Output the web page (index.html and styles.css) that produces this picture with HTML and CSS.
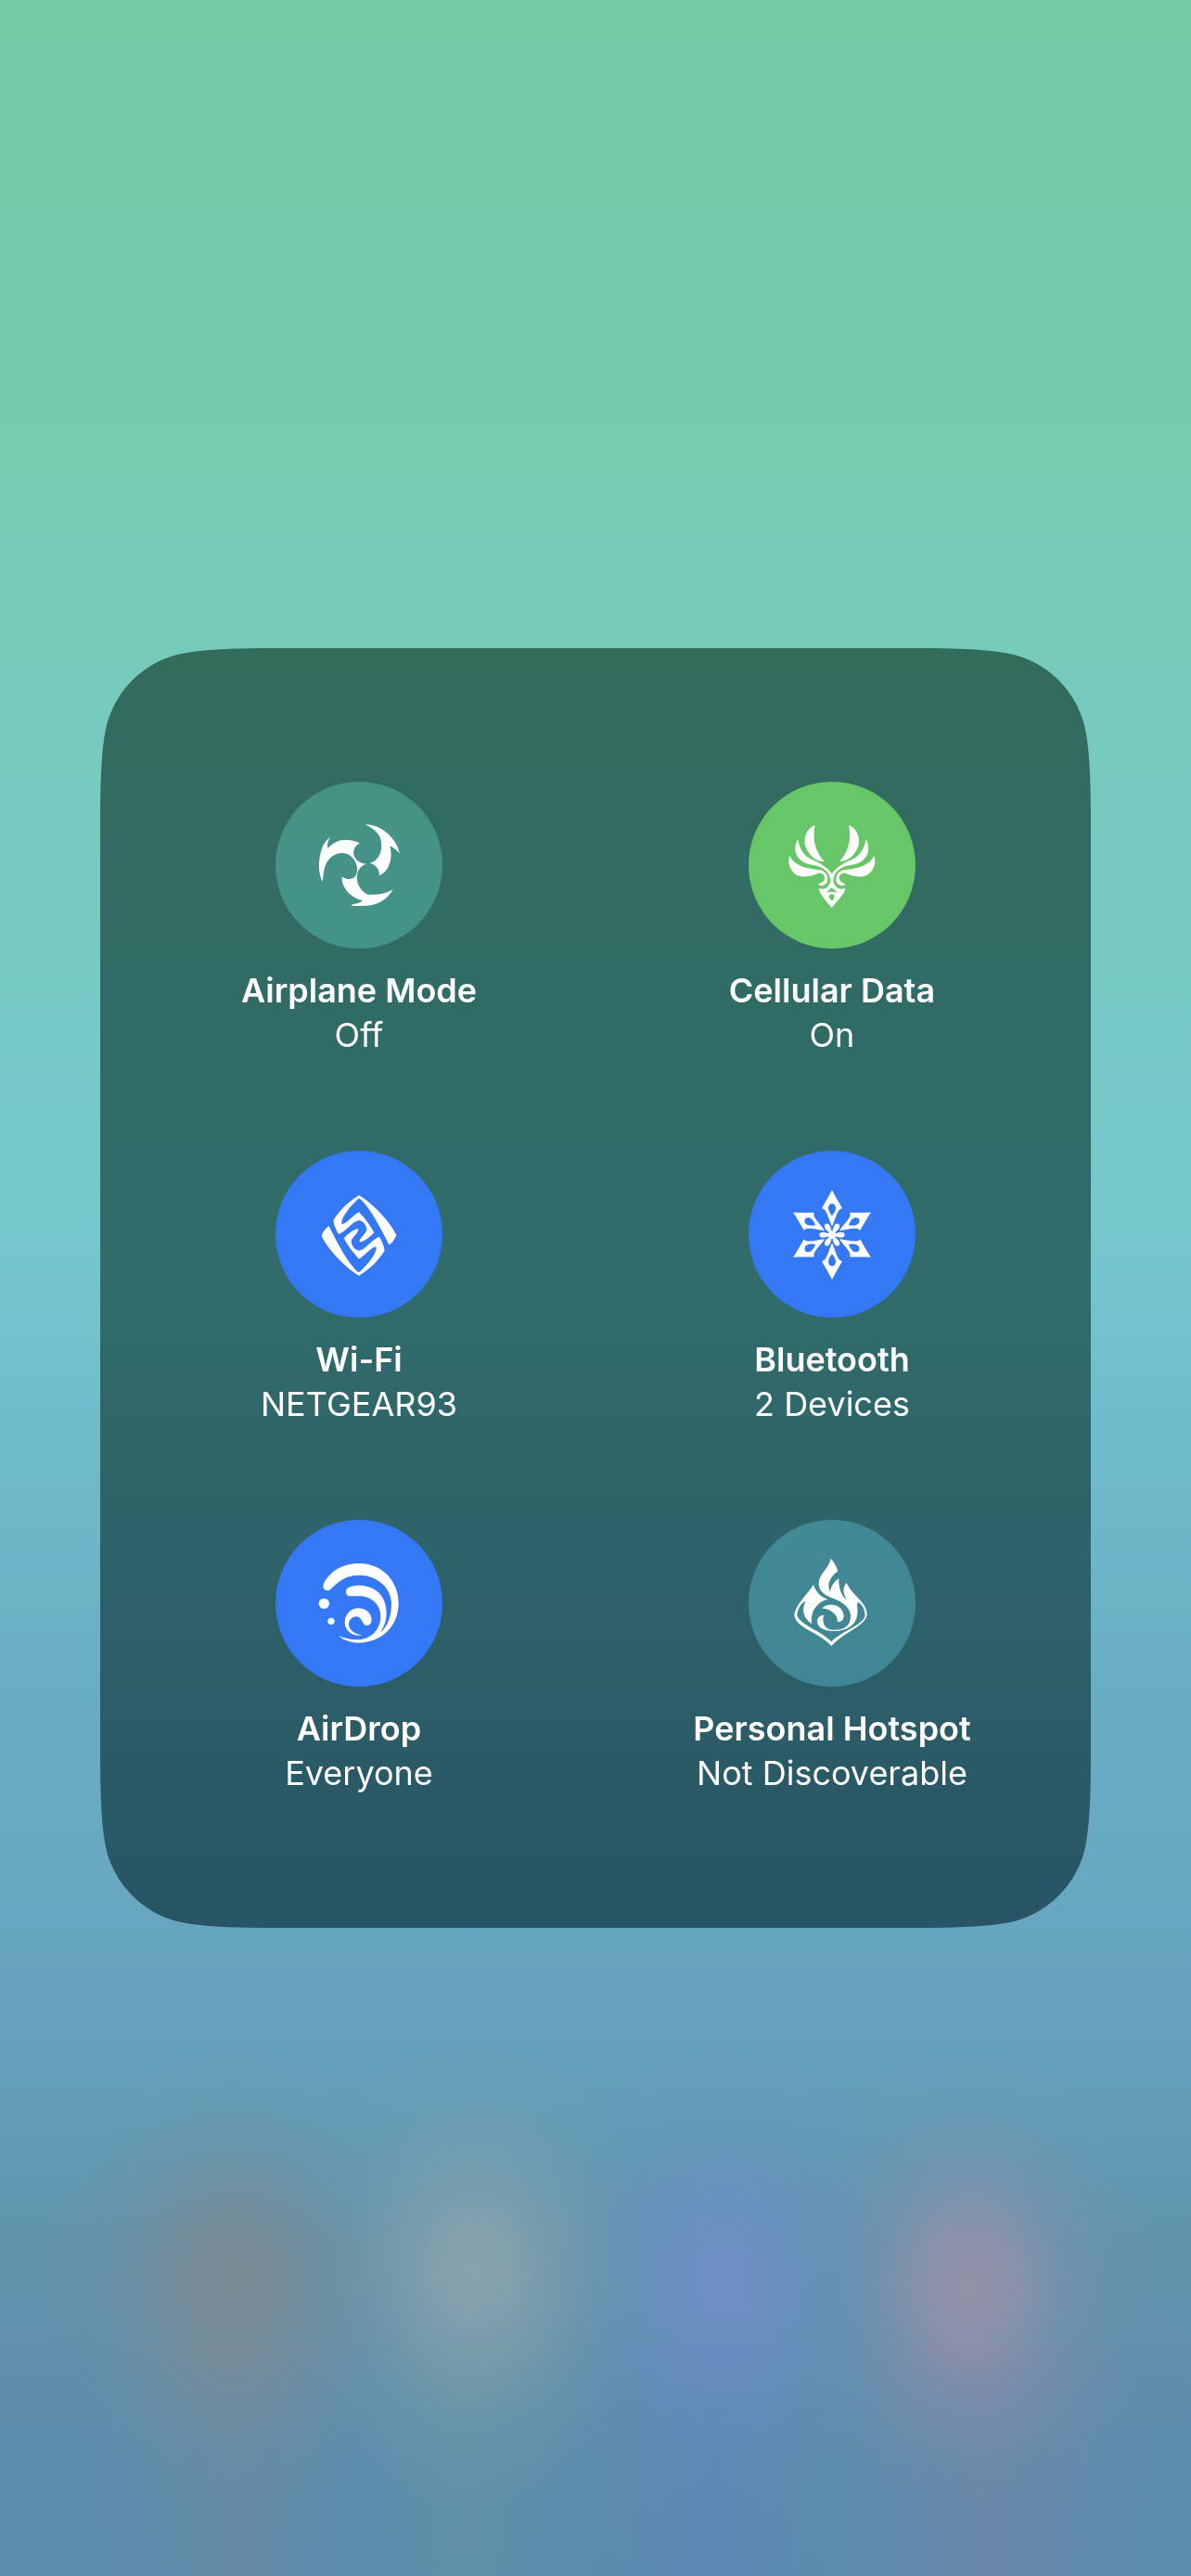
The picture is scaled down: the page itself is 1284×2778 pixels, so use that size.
FILE: index.html
```html
<!DOCTYPE html>
<html lang="en">
<head>
<meta charset="utf-8">
<meta name="viewport" content="width=device-width, initial-scale=1">
<title>Connectivity</title>
<link rel="stylesheet" href="styles.css">
</head>
<body>
<main class="screen">
  <section class="panel" aria-label="Connectivity">
    <button class="tile" type="button" aria-pressed="false">
      <span class="disc disc-off">
        <svg class="glyph" viewBox="33 33 540 540" aria-hidden="true">
          <path d="M323 172C370 168 425 215 435 265C427 256 414 246 403 240C414 280 400 325 369 336C370 318 358 300 337 297C365 290 381 262 374 222C370 202 350 184 323 172Z"/>
          <path d="M211 212C202 224 199 236 202 249C225 220 265 212 306 232C288 240 280 262 290 278C297 292 312 297 328 299C310 302 296 320 296 344C298 370 312 388 332 398C355 398 385 400 413 381C395 415 365 428 342 433C320 436 298 435 279 434C276 428 302 430 315 418C275 408 245 375 248 340C258 350 275 351 288 343C306 325 298 285 268 268C235 255 205 275 194 305C187 325 188 340 185 356C165 320 172 235 211 212Z"/>
        </svg>
      </span>
      <span class="name">Airplane Mode</span>
      <span class="state">Off</span>
    </button>

    <button class="tile" type="button" aria-pressed="true">
      <span class="disc disc-green">
        <svg class="glyph" viewBox="33 33 540 540" aria-hidden="true">
          <defs>
            <g id="wing">
              <path d="M248 174C238 222 250 260 277 290C258 297 220 268 215 232C213 204 226 181 248 174Z"/>
              <path d="M192 218C198 250 210 272 240 286C268 298 292 314 303 332L303 376L285 376C297 366 300 354 296 342C288 314 262 306 232 301C190 290 173 258 192 218Z"/>
              <path d="M166 273C180 300 208 314 258 318C284 318 295 345 286 360C280 370 265 371 259 367C260 359 280 362 279 343C277 329 264 326 254 331C236 339 204 346 185 333C166 318 158 293 166 273Z"/>
            </g>
          </defs>
          <use href="#wing"/>
          <use href="#wing" transform="matrix(-1 0 0 1 605 0)"/>
          <path fill-rule="evenodd" d="M260 378C271 382 284 380 290 372L315 372C321 380 334 382 346 378C344 394 330 408 302 441C275 408 262 394 260 378ZM302 375C297 381 290 386 286 392C296 388 309 388 319 392C315 386 308 381 302 375ZM302 397C295 396 293 402 294 408C296 414 299 416 302 417C306 416 309 414 310 408C311 402 309 396 302 397Z"/>
        </svg>
      </span>
      <span class="name">Cellular Data</span>
      <span class="state">On</span>
    </button>

    <button class="tile" type="button" aria-pressed="true">
      <span class="disc disc-blue">
        <svg class="glyph" viewBox="33 33 540 540" aria-hidden="true">
          <defs>
            <path id="spiral" d="M303 177C265 200 237 230 220 258C222 275 231 292 237 303C258 297 282 262 302 258C319 260 328 276 328 290C322 304 304 315 305 328C318 330 340 310 352 298C340 275 323 252 303 231C285 240 264 268 248 271C241 250 284 203 303 187C332 205 372 280 400 337C410 333 420 317 424 306C405 262 340 197 303 177Z"/>
          </defs>
          <use href="#spiral"/>
          <use href="#spiral" transform="rotate(180 303 307)"/>
        </svg>
      </span>
      <span class="name">Wi-Fi</span>
      <span class="state">NETGEAR93</span>
    </button>

    <button class="tile" type="button" aria-pressed="true">
      <span class="disc disc-blue">
        <svg class="glyph" viewBox="33 33 540 540" aria-hidden="true">
          <defs>
            <g id="crystal">
              <path fill-rule="evenodd" d="M303 160C313 180 325 200 336 219C320 222 316 248 304 276L302 276C290 248 286 222 270 219C281 200 293 180 303 160ZM303 204C293 205 289 215 292 224C295 234 300 239 303 243C306 239 311 234 314 224C317 215 313 205 303 204Z"/>
              <path transform="rotate(30 303 305)" d="M303 305L297 289C292 274 294 265 303 264C312 265 314 274 309 289Z"/>
            </g>
          </defs>
          <use href="#crystal"/>
          <use href="#crystal" transform="rotate(60 303 305)"/>
          <use href="#crystal" transform="rotate(120 303 305)"/>
          <use href="#crystal" transform="rotate(180 303 305)"/>
          <use href="#crystal" transform="rotate(240 303 305)"/>
          <use href="#crystal" transform="rotate(300 303 305)"/>
          <circle cx="303" cy="305" r="13"/>
        </svg>
      </span>
      <span class="name">Bluetooth</span>
      <span class="state">2 Devices</span>
    </button>

    <button class="tile" type="button" aria-pressed="true">
      <span class="disc disc-blue">
        <svg class="glyph" viewBox="33 33 540 540" aria-hidden="true">
          <path d="M187 246C200 205 247 174 303 174C378 174 431 230 431 303C431 378 375 431 300 431C275 430 250 421 237 408C255 416 280 422 300 421C345 419 373 385 373 345C373 305 340 278 300 280L270 280C257 276 256 255 275 250C320 235 392 255 392 335C392 365 380 382 373 398C400 372 408 340 408 300C405 250 360 212 303 212C262 212 235 232 210 259C200 267 186 258 187 246Z"/>
          <path d="M316 406C285 412 257 395 257 364C258 336 280 318 303 319C327 320 345 338 344 358C343 372 332 378 322 373C313 368 312 348 296 346C280 346 270 358 270 372C272 393 295 405 316 406Z"/>
          <circle cx="190" cy="304" r="17"/>
          <circle cx="213" cy="361" r="11"/>
        </svg>
      </span>
      <span class="name">AirDrop</span>
      <span class="state">Everyone</span>
    </button>

    <button class="tile" type="button" aria-pressed="false">
      <span class="disc disc-off disc-cool">
        <svg class="glyph" viewBox="33 33 540 540" aria-hidden="true">
          <path d="M299 158C311 172 320 188 322 199C300 215 283 240 297 266C300 248 308 235 325 222C324 255 333 280 352 294C336 272 338 248 350 237C366 275 414 300 416 335C418 375 345 392 301 441C260 396 182 382 181 340C184 310 222 275 243 243C250 265 268 285 290 290C258 295 230 330 238 370C212 352 202 325 218 296C200 303 190 325 190 343C200 373 268 393 301 427C335 393 405 373 410 342C408 320 400 305 386 299C382 310 387 320 385 340C380 375 350 393 310 393C275 393 255 380 255 360C256 348 265 342 277 341C270 360 275 389 310 389C345 389 363 375 363 345C364 320 340 298 300 285C275 275 260 262 260 238C262 205 294 190 299 158Z"/>
          <path d="M271 319C285 302 335 300 341 343C341 358 330 366 320 362C324 345 302 322 271 319Z"/>
        </svg>
      </span>
      <span class="name">Personal Hotspot</span>
      <span class="state">Not Discoverable</span>
    </button>
  </section>
</main>
</body>
</html>
```

FILE: styles.css
```css
* {
  box-sizing: border-box;
}

body {
  margin: 0;
  font-family: Inter, "Liberation Sans", sans-serif;
}

/* Blurred wallpaper: soft dock icons over a vertical gradient */
.screen {
  display: flex;
  align-items: center;
  justify-content: center;
  min-height: 100vh;
  padding: 96px;
  background:
    radial-gradient(ellipse 200px 250px at 19.5% 88.6%, rgb(130 135 138 / 0.75), rgb(128 136 140 / 0.64) 25%, rgb(124 138 146 / 0.38) 50%, rgb(120 140 150 / 0.12) 75%, rgb(120 140 150 / 0)),
    radial-gradient(ellipse 200px 250px at 39.8% 88.2%, rgb(146 168 172 / 0.8), rgb(142 165 172 / 0.66) 25%, rgb(136 162 171 / 0.38) 50%, rgb(130 158 170 / 0.12) 75%, rgb(130 158 170 / 0)),
    radial-gradient(ellipse 200px 250px at 60.8% 88.6%, rgb(116 142 206 / 0.8), rgb(112 142 202 / 0.66) 25%, rgb(108 142 200 / 0.38) 50%, rgb(104 142 196 / 0.12) 75%, rgb(104 142 196 / 0)),
    radial-gradient(ellipse 200px 250px at 81.5% 88.8%, rgb(154 146 168 / 0.9), rgb(150 145 169 / 0.74) 25%, rgb(136 144 171 / 0.42) 50%, rgb(126 144 172 / 0.13) 75%, rgb(126 144 172 / 0)),
    linear-gradient(90deg, transparent 8%, rgb(112 138 158 / 0.5) 20%, transparent 30%, rgb(98 148 160 / 0.5) 39%, transparent 49%, rgb(94 132 186 / 0.5) 60%, transparent 70%, rgb(116 132 166 / 0.6) 83%, transparent 96%) bottom / 100% 9% no-repeat,
    linear-gradient(#75cba6 0%, #76cbb0 17%, #77cbbc 26%, #76cac4 38%, #75c8cd 48%, #70bccd 55%, #69adc2 66%, #67a5bf 76%, #639eb9 81%, #6194ad 87%, #5f8fac 92%, #5b8daf 100%);
}

.panel {
  display: grid;
  grid-template-columns: 1fr 1fr;
  row-gap: 101px;
  width: 100%;
  max-width: 1068px;
  padding: 144px 24px 143px;
  background: linear-gradient(#326c5b, #316b65 25%, #316b6b 50%, #2e6369 70%, #285465);
  border-radius: 120px;
  /* Continuous-curvature corners, sliced so they hold at any panel size */
  -webkit-mask-box-image: url("data:image/svg+xml,%3Csvg xmlns='http://www.w3.org/2000/svg' width='600' height='600'%3E%3Cpath d='M200 0H400C444 0 497 0 524 9C556 20 580 44 591 76C600 103 600 156 600 200V400C600 444 600 497 591 524C580 556 556 580 524 591C497 600 444 600 400 600H200C156 600 103 600 76 591C44 580 20 556 9 524C0 497 0 444 0 400V200C0 156 0 103 9 76C20 44 44 20 76 9C103 0 156 0 200 0Z'/%3E%3C/svg%3E") 210 fill / 210px;
}

@supports (-webkit-mask-box-image: none) {
  .panel {
    border-radius: 0;
  }
}

.tile {
  display: flex;
  flex-direction: column;
  align-items: center;
  padding: 0;
  border: 0;
  background: none;
  color: #fff;
  font: inherit;
  font-size: 36px;
  line-height: 48px;
}

.disc {
  width: 180px;
  height: 180px;
  margin-bottom: 21px;
  border-radius: 50%;
}

.disc-off {
  background: rgb(98 208 190 / 0.4);
}

.disc-cool {
  background: rgb(94 196 214 / 0.4);
}

.disc-green {
  background: #67c667;
}

.disc-blue {
  background: #3478f6;
}

.glyph {
  display: block;
  width: 100%;
  height: 100%;
  fill: #fff;
}

.name {
  font-weight: 600;
}

.state {
  font-weight: 400;
}
```
